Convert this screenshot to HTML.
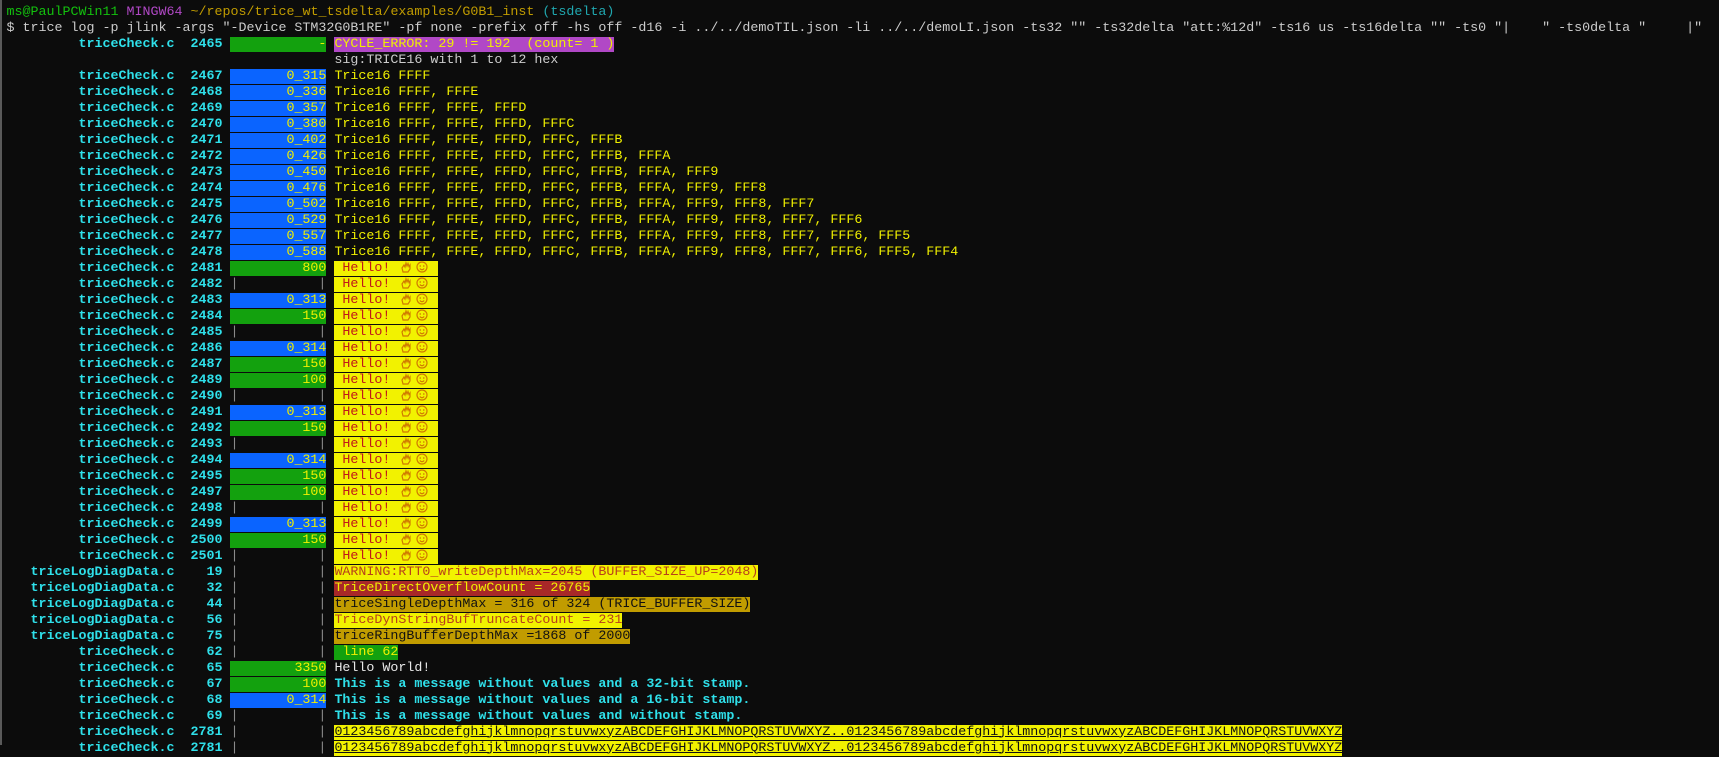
<!DOCTYPE html>
<html><head><meta charset="utf-8">
<style>
html,body{margin:0;padding:0;background:#0c0c0c;}
body{width:1719px;height:745px;overflow:hidden;position:relative;border-left:2px solid #5a5a5a;box-sizing:border-box;}
#t{position:absolute;left:4.5px;top:4.5px;font-family:"Liberation Mono","DejaVu Sans Mono",monospace;font-size:13.333px;line-height:16px;color:#cccccc;white-space:normal;}
.r{height:16px;white-space:pre;}
.f{color:#2fe0ea;font-weight:bold;}
.bl{background:#0a64ff;color:#f0f000;}
.gr{background:#13a10e;color:#f0f000;}
.p{color:#8a8a8a;}
.y{color:#f0f000;}
.pu{background:#b148c6;color:#f0f000;}
.h{background:#f2f200;color:#c01818;}
.e{display:inline-block;width:16px;height:12px;vertical-align:-2px;}
.e svg{display:block;margin:0 0 0 2px;}
.w{background:#f2f200;color:#b8401a;}
.rd{background:#a82828;color:#f0f000;}
.ol{background:#c19c00;color:#111;}
.wh{color:#e8e8e8;}
.c{color:#2fe0ea;font-weight:bold;}
.u{background:#f2f200;color:#111;text-decoration:underline;}
</style></head><body><div id="t">
<div class="r"><span style="color:#13c10e">ms@PaulPCWin11</span> <span style="color:#b148c6">MINGW64</span> <span style="color:#c19c00">~/repos/trice_wt_tsdelta/examples/G0B1_inst</span> <span style="color:#20a8b0">(tsdelta)</span></div>
<div class="r">$ trice log -p jlink -args "-Device STM32G0B1RE" -pf none -prefix off -hs off -d16 -i ../../demoTIL.json -li ../../demoLI.json -ts32 "" -ts32delta "att:%12d" -ts16 us -ts16delta "" -ts0 "|    " -ts0delta "     |"</div>
<div class="r"><span class="f">         triceCheck.c  2465</span> <span class="gr">           -</span> <span class="pu">CYCLE_ERROR: 29 != 192  (count= 1 )</span></div>
<div class="r">                                         sig:TRICE16 with 1 to 12 hex</div>
<div class="r"><span class="f">         triceCheck.c  2467</span> <span class="bl">       0_315</span> <span class="y">Trice16 FFFF</span></div>
<div class="r"><span class="f">         triceCheck.c  2468</span> <span class="bl">       0_336</span> <span class="y">Trice16 FFFF, FFFE</span></div>
<div class="r"><span class="f">         triceCheck.c  2469</span> <span class="bl">       0_357</span> <span class="y">Trice16 FFFF, FFFE, FFFD</span></div>
<div class="r"><span class="f">         triceCheck.c  2470</span> <span class="bl">       0_380</span> <span class="y">Trice16 FFFF, FFFE, FFFD, FFFC</span></div>
<div class="r"><span class="f">         triceCheck.c  2471</span> <span class="bl">       0_402</span> <span class="y">Trice16 FFFF, FFFE, FFFD, FFFC, FFFB</span></div>
<div class="r"><span class="f">         triceCheck.c  2472</span> <span class="bl">       0_426</span> <span class="y">Trice16 FFFF, FFFE, FFFD, FFFC, FFFB, FFFA</span></div>
<div class="r"><span class="f">         triceCheck.c  2473</span> <span class="bl">       0_450</span> <span class="y">Trice16 FFFF, FFFE, FFFD, FFFC, FFFB, FFFA, FFF9</span></div>
<div class="r"><span class="f">         triceCheck.c  2474</span> <span class="bl">       0_476</span> <span class="y">Trice16 FFFF, FFFE, FFFD, FFFC, FFFB, FFFA, FFF9, FFF8</span></div>
<div class="r"><span class="f">         triceCheck.c  2475</span> <span class="bl">       0_502</span> <span class="y">Trice16 FFFF, FFFE, FFFD, FFFC, FFFB, FFFA, FFF9, FFF8, FFF7</span></div>
<div class="r"><span class="f">         triceCheck.c  2476</span> <span class="bl">       0_529</span> <span class="y">Trice16 FFFF, FFFE, FFFD, FFFC, FFFB, FFFA, FFF9, FFF8, FFF7, FFF6</span></div>
<div class="r"><span class="f">         triceCheck.c  2477</span> <span class="bl">       0_557</span> <span class="y">Trice16 FFFF, FFFE, FFFD, FFFC, FFFB, FFFA, FFF9, FFF8, FFF7, FFF6, FFF5</span></div>
<div class="r"><span class="f">         triceCheck.c  2478</span> <span class="bl">       0_588</span> <span class="y">Trice16 FFFF, FFFE, FFFD, FFFC, FFFB, FFFA, FFF9, FFF8, FFF7, FFF6, FFF5, FFF4</span></div>
<div class="r"><span class="f">         triceCheck.c  2481</span> <span class="gr">         800</span> <span class="h"> Hello! <span class="e"><svg width="12" height="12" viewBox="0 0 12 12" fill="none" stroke="#d07a00" stroke-width="1.2"><path d="M3 11 L2 7 L4 4 L5 6 L6 2 L7 5 L8 2.5 L9 5.5 L10 4 L10 8 L8 11 Z"/></svg></span><span class="e"><svg width="12" height="12" viewBox="0 0 12 12" fill="none" stroke="#d07a00" stroke-width="1.2"><circle cx="6" cy="6" r="5"/><path d="M3.5 5 L5 5 M7 5 L8.5 5 M3.8 7.5 Q6 10 8.2 7.5"/></svg></span> </span></div>
<div class="r"><span class="f">         triceCheck.c  2482</span> <span class="p">|          |</span> <span class="h"> Hello! <span class="e"><svg width="12" height="12" viewBox="0 0 12 12" fill="none" stroke="#d07a00" stroke-width="1.2"><path d="M3 11 L2 7 L4 4 L5 6 L6 2 L7 5 L8 2.5 L9 5.5 L10 4 L10 8 L8 11 Z"/></svg></span><span class="e"><svg width="12" height="12" viewBox="0 0 12 12" fill="none" stroke="#d07a00" stroke-width="1.2"><circle cx="6" cy="6" r="5"/><path d="M3.5 5 L5 5 M7 5 L8.5 5 M3.8 7.5 Q6 10 8.2 7.5"/></svg></span> </span></div>
<div class="r"><span class="f">         triceCheck.c  2483</span> <span class="bl">       0_313</span> <span class="h"> Hello! <span class="e"><svg width="12" height="12" viewBox="0 0 12 12" fill="none" stroke="#d07a00" stroke-width="1.2"><path d="M3 11 L2 7 L4 4 L5 6 L6 2 L7 5 L8 2.5 L9 5.5 L10 4 L10 8 L8 11 Z"/></svg></span><span class="e"><svg width="12" height="12" viewBox="0 0 12 12" fill="none" stroke="#d07a00" stroke-width="1.2"><circle cx="6" cy="6" r="5"/><path d="M3.5 5 L5 5 M7 5 L8.5 5 M3.8 7.5 Q6 10 8.2 7.5"/></svg></span> </span></div>
<div class="r"><span class="f">         triceCheck.c  2484</span> <span class="gr">         150</span> <span class="h"> Hello! <span class="e"><svg width="12" height="12" viewBox="0 0 12 12" fill="none" stroke="#d07a00" stroke-width="1.2"><path d="M3 11 L2 7 L4 4 L5 6 L6 2 L7 5 L8 2.5 L9 5.5 L10 4 L10 8 L8 11 Z"/></svg></span><span class="e"><svg width="12" height="12" viewBox="0 0 12 12" fill="none" stroke="#d07a00" stroke-width="1.2"><circle cx="6" cy="6" r="5"/><path d="M3.5 5 L5 5 M7 5 L8.5 5 M3.8 7.5 Q6 10 8.2 7.5"/></svg></span> </span></div>
<div class="r"><span class="f">         triceCheck.c  2485</span> <span class="p">|          |</span> <span class="h"> Hello! <span class="e"><svg width="12" height="12" viewBox="0 0 12 12" fill="none" stroke="#d07a00" stroke-width="1.2"><path d="M3 11 L2 7 L4 4 L5 6 L6 2 L7 5 L8 2.5 L9 5.5 L10 4 L10 8 L8 11 Z"/></svg></span><span class="e"><svg width="12" height="12" viewBox="0 0 12 12" fill="none" stroke="#d07a00" stroke-width="1.2"><circle cx="6" cy="6" r="5"/><path d="M3.5 5 L5 5 M7 5 L8.5 5 M3.8 7.5 Q6 10 8.2 7.5"/></svg></span> </span></div>
<div class="r"><span class="f">         triceCheck.c  2486</span> <span class="bl">       0_314</span> <span class="h"> Hello! <span class="e"><svg width="12" height="12" viewBox="0 0 12 12" fill="none" stroke="#d07a00" stroke-width="1.2"><path d="M3 11 L2 7 L4 4 L5 6 L6 2 L7 5 L8 2.5 L9 5.5 L10 4 L10 8 L8 11 Z"/></svg></span><span class="e"><svg width="12" height="12" viewBox="0 0 12 12" fill="none" stroke="#d07a00" stroke-width="1.2"><circle cx="6" cy="6" r="5"/><path d="M3.5 5 L5 5 M7 5 L8.5 5 M3.8 7.5 Q6 10 8.2 7.5"/></svg></span> </span></div>
<div class="r"><span class="f">         triceCheck.c  2487</span> <span class="gr">         150</span> <span class="h"> Hello! <span class="e"><svg width="12" height="12" viewBox="0 0 12 12" fill="none" stroke="#d07a00" stroke-width="1.2"><path d="M3 11 L2 7 L4 4 L5 6 L6 2 L7 5 L8 2.5 L9 5.5 L10 4 L10 8 L8 11 Z"/></svg></span><span class="e"><svg width="12" height="12" viewBox="0 0 12 12" fill="none" stroke="#d07a00" stroke-width="1.2"><circle cx="6" cy="6" r="5"/><path d="M3.5 5 L5 5 M7 5 L8.5 5 M3.8 7.5 Q6 10 8.2 7.5"/></svg></span> </span></div>
<div class="r"><span class="f">         triceCheck.c  2489</span> <span class="gr">         100</span> <span class="h"> Hello! <span class="e"><svg width="12" height="12" viewBox="0 0 12 12" fill="none" stroke="#d07a00" stroke-width="1.2"><path d="M3 11 L2 7 L4 4 L5 6 L6 2 L7 5 L8 2.5 L9 5.5 L10 4 L10 8 L8 11 Z"/></svg></span><span class="e"><svg width="12" height="12" viewBox="0 0 12 12" fill="none" stroke="#d07a00" stroke-width="1.2"><circle cx="6" cy="6" r="5"/><path d="M3.5 5 L5 5 M7 5 L8.5 5 M3.8 7.5 Q6 10 8.2 7.5"/></svg></span> </span></div>
<div class="r"><span class="f">         triceCheck.c  2490</span> <span class="p">|          |</span> <span class="h"> Hello! <span class="e"><svg width="12" height="12" viewBox="0 0 12 12" fill="none" stroke="#d07a00" stroke-width="1.2"><path d="M3 11 L2 7 L4 4 L5 6 L6 2 L7 5 L8 2.5 L9 5.5 L10 4 L10 8 L8 11 Z"/></svg></span><span class="e"><svg width="12" height="12" viewBox="0 0 12 12" fill="none" stroke="#d07a00" stroke-width="1.2"><circle cx="6" cy="6" r="5"/><path d="M3.5 5 L5 5 M7 5 L8.5 5 M3.8 7.5 Q6 10 8.2 7.5"/></svg></span> </span></div>
<div class="r"><span class="f">         triceCheck.c  2491</span> <span class="bl">       0_313</span> <span class="h"> Hello! <span class="e"><svg width="12" height="12" viewBox="0 0 12 12" fill="none" stroke="#d07a00" stroke-width="1.2"><path d="M3 11 L2 7 L4 4 L5 6 L6 2 L7 5 L8 2.5 L9 5.5 L10 4 L10 8 L8 11 Z"/></svg></span><span class="e"><svg width="12" height="12" viewBox="0 0 12 12" fill="none" stroke="#d07a00" stroke-width="1.2"><circle cx="6" cy="6" r="5"/><path d="M3.5 5 L5 5 M7 5 L8.5 5 M3.8 7.5 Q6 10 8.2 7.5"/></svg></span> </span></div>
<div class="r"><span class="f">         triceCheck.c  2492</span> <span class="gr">         150</span> <span class="h"> Hello! <span class="e"><svg width="12" height="12" viewBox="0 0 12 12" fill="none" stroke="#d07a00" stroke-width="1.2"><path d="M3 11 L2 7 L4 4 L5 6 L6 2 L7 5 L8 2.5 L9 5.5 L10 4 L10 8 L8 11 Z"/></svg></span><span class="e"><svg width="12" height="12" viewBox="0 0 12 12" fill="none" stroke="#d07a00" stroke-width="1.2"><circle cx="6" cy="6" r="5"/><path d="M3.5 5 L5 5 M7 5 L8.5 5 M3.8 7.5 Q6 10 8.2 7.5"/></svg></span> </span></div>
<div class="r"><span class="f">         triceCheck.c  2493</span> <span class="p">|          |</span> <span class="h"> Hello! <span class="e"><svg width="12" height="12" viewBox="0 0 12 12" fill="none" stroke="#d07a00" stroke-width="1.2"><path d="M3 11 L2 7 L4 4 L5 6 L6 2 L7 5 L8 2.5 L9 5.5 L10 4 L10 8 L8 11 Z"/></svg></span><span class="e"><svg width="12" height="12" viewBox="0 0 12 12" fill="none" stroke="#d07a00" stroke-width="1.2"><circle cx="6" cy="6" r="5"/><path d="M3.5 5 L5 5 M7 5 L8.5 5 M3.8 7.5 Q6 10 8.2 7.5"/></svg></span> </span></div>
<div class="r"><span class="f">         triceCheck.c  2494</span> <span class="bl">       0_314</span> <span class="h"> Hello! <span class="e"><svg width="12" height="12" viewBox="0 0 12 12" fill="none" stroke="#d07a00" stroke-width="1.2"><path d="M3 11 L2 7 L4 4 L5 6 L6 2 L7 5 L8 2.5 L9 5.5 L10 4 L10 8 L8 11 Z"/></svg></span><span class="e"><svg width="12" height="12" viewBox="0 0 12 12" fill="none" stroke="#d07a00" stroke-width="1.2"><circle cx="6" cy="6" r="5"/><path d="M3.5 5 L5 5 M7 5 L8.5 5 M3.8 7.5 Q6 10 8.2 7.5"/></svg></span> </span></div>
<div class="r"><span class="f">         triceCheck.c  2495</span> <span class="gr">         150</span> <span class="h"> Hello! <span class="e"><svg width="12" height="12" viewBox="0 0 12 12" fill="none" stroke="#d07a00" stroke-width="1.2"><path d="M3 11 L2 7 L4 4 L5 6 L6 2 L7 5 L8 2.5 L9 5.5 L10 4 L10 8 L8 11 Z"/></svg></span><span class="e"><svg width="12" height="12" viewBox="0 0 12 12" fill="none" stroke="#d07a00" stroke-width="1.2"><circle cx="6" cy="6" r="5"/><path d="M3.5 5 L5 5 M7 5 L8.5 5 M3.8 7.5 Q6 10 8.2 7.5"/></svg></span> </span></div>
<div class="r"><span class="f">         triceCheck.c  2497</span> <span class="gr">         100</span> <span class="h"> Hello! <span class="e"><svg width="12" height="12" viewBox="0 0 12 12" fill="none" stroke="#d07a00" stroke-width="1.2"><path d="M3 11 L2 7 L4 4 L5 6 L6 2 L7 5 L8 2.5 L9 5.5 L10 4 L10 8 L8 11 Z"/></svg></span><span class="e"><svg width="12" height="12" viewBox="0 0 12 12" fill="none" stroke="#d07a00" stroke-width="1.2"><circle cx="6" cy="6" r="5"/><path d="M3.5 5 L5 5 M7 5 L8.5 5 M3.8 7.5 Q6 10 8.2 7.5"/></svg></span> </span></div>
<div class="r"><span class="f">         triceCheck.c  2498</span> <span class="p">|          |</span> <span class="h"> Hello! <span class="e"><svg width="12" height="12" viewBox="0 0 12 12" fill="none" stroke="#d07a00" stroke-width="1.2"><path d="M3 11 L2 7 L4 4 L5 6 L6 2 L7 5 L8 2.5 L9 5.5 L10 4 L10 8 L8 11 Z"/></svg></span><span class="e"><svg width="12" height="12" viewBox="0 0 12 12" fill="none" stroke="#d07a00" stroke-width="1.2"><circle cx="6" cy="6" r="5"/><path d="M3.5 5 L5 5 M7 5 L8.5 5 M3.8 7.5 Q6 10 8.2 7.5"/></svg></span> </span></div>
<div class="r"><span class="f">         triceCheck.c  2499</span> <span class="bl">       0_313</span> <span class="h"> Hello! <span class="e"><svg width="12" height="12" viewBox="0 0 12 12" fill="none" stroke="#d07a00" stroke-width="1.2"><path d="M3 11 L2 7 L4 4 L5 6 L6 2 L7 5 L8 2.5 L9 5.5 L10 4 L10 8 L8 11 Z"/></svg></span><span class="e"><svg width="12" height="12" viewBox="0 0 12 12" fill="none" stroke="#d07a00" stroke-width="1.2"><circle cx="6" cy="6" r="5"/><path d="M3.5 5 L5 5 M7 5 L8.5 5 M3.8 7.5 Q6 10 8.2 7.5"/></svg></span> </span></div>
<div class="r"><span class="f">         triceCheck.c  2500</span> <span class="gr">         150</span> <span class="h"> Hello! <span class="e"><svg width="12" height="12" viewBox="0 0 12 12" fill="none" stroke="#d07a00" stroke-width="1.2"><path d="M3 11 L2 7 L4 4 L5 6 L6 2 L7 5 L8 2.5 L9 5.5 L10 4 L10 8 L8 11 Z"/></svg></span><span class="e"><svg width="12" height="12" viewBox="0 0 12 12" fill="none" stroke="#d07a00" stroke-width="1.2"><circle cx="6" cy="6" r="5"/><path d="M3.5 5 L5 5 M7 5 L8.5 5 M3.8 7.5 Q6 10 8.2 7.5"/></svg></span> </span></div>
<div class="r"><span class="f">         triceCheck.c  2501</span> <span class="p">|          |</span> <span class="h"> Hello! <span class="e"><svg width="12" height="12" viewBox="0 0 12 12" fill="none" stroke="#d07a00" stroke-width="1.2"><path d="M3 11 L2 7 L4 4 L5 6 L6 2 L7 5 L8 2.5 L9 5.5 L10 4 L10 8 L8 11 Z"/></svg></span><span class="e"><svg width="12" height="12" viewBox="0 0 12 12" fill="none" stroke="#d07a00" stroke-width="1.2"><circle cx="6" cy="6" r="5"/><path d="M3.5 5 L5 5 M7 5 L8.5 5 M3.8 7.5 Q6 10 8.2 7.5"/></svg></span> </span></div>
<div class="r"><span class="f">   triceLogDiagData.c    19</span> <span class="p">|          |</span> <span class="w">WARNING:RTT0_writeDepthMax=2045 (BUFFER_SIZE_UP=2048)</span></div>
<div class="r"><span class="f">   triceLogDiagData.c    32</span> <span class="p">|          |</span> <span class="rd">TriceDirectOverflowCount = 26765</span></div>
<div class="r"><span class="f">   triceLogDiagData.c    44</span> <span class="p">|          |</span> <span class="ol">triceSingleDepthMax = 316 of 324 (TRICE_BUFFER_SIZE)</span></div>
<div class="r"><span class="f">   triceLogDiagData.c    56</span> <span class="p">|          |</span> <span class="w">TriceDynStringBufTruncateCount = 231</span></div>
<div class="r"><span class="f">   triceLogDiagData.c    75</span> <span class="p">|          |</span> <span class="ol">triceRingBufferDepthMax =1868 of 2000</span></div>
<div class="r"><span class="f">         triceCheck.c    62</span> <span class="p">|          |</span> <span class="gr"> line 62</span></div>
<div class="r"><span class="f">         triceCheck.c    65</span> <span class="gr">        3350</span> <span class="wh">Hello World!</span></div>
<div class="r"><span class="f">         triceCheck.c    67</span> <span class="gr">         100</span> <span class="c">This is a message without values and a 32-bit stamp.</span></div>
<div class="r"><span class="f">         triceCheck.c    68</span> <span class="bl">       0_314</span> <span class="c">This is a message without values and a 16-bit stamp.</span></div>
<div class="r"><span class="f">         triceCheck.c    69</span> <span class="p">|          |</span> <span class="c">This is a message without values and without stamp.</span></div>
<div class="r"><span class="f">         triceCheck.c  2781</span> <span class="p">|          |</span> <span class="u">0123456789abcdefghijklmnopqrstuvwxyzABCDEFGHIJKLMNOPQRSTUVWXYZ..0123456789abcdefghijklmnopqrstuvwxyzABCDEFGHIJKLMNOPQRSTUVWXYZ</span></div>
<div class="r"><span class="f">         triceCheck.c  2781</span> <span class="p">|          |</span> <span class="u">0123456789abcdefghijklmnopqrstuvwxyzABCDEFGHIJKLMNOPQRSTUVWXYZ..0123456789abcdefghijklmnopqrstuvwxyzABCDEFGHIJKLMNOPQRSTUVWXYZ</span></div>
</div></body></html>
